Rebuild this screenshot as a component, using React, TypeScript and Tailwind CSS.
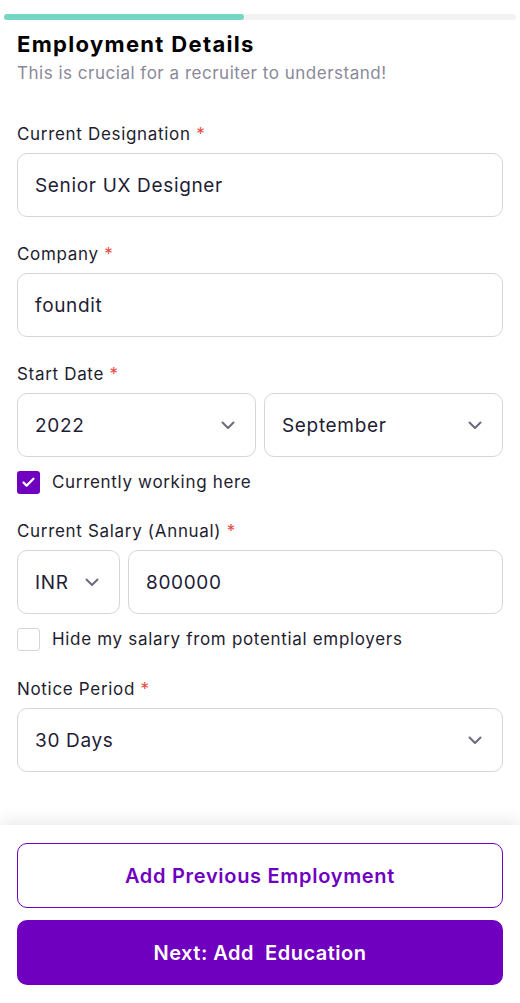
import { Check } from "lucide-react";

function Chevron() {
  return (
    <svg width="14" height="9" viewBox="0 0 14 9" fill="none" className="shrink-0">
      <path
        d="M1.5 1.5L7 7L12.5 1.5"
        stroke="#6b6a7e"
        strokeWidth="2"
        strokeLinecap="round"
        strokeLinejoin="round"
      />
    </svg>
  );
}

function Label({ text }: { text: string }) {
  return (
    <div className="h-[24px] text-[17px] leading-[24px] tracking-[0.04em] text-[#1e1d2f]">
      {text} <span className="text-[#e5483d]">*</span>
    </div>
  );
}

function TextBox({ value, className = "" }: { value: string; className?: string }) {
  return (
    <div
      className={`flex h-[64px] items-center rounded-[10px] border border-[#d6d6da] px-[17px] pt-[2px] text-[19px] tracking-[0.035em] text-[#1f1d36] ${className}`}
    >
      {value}
    </div>
  );
}

function SelectBox({ value, className = "" }: { value: string; className?: string }) {
  return (
    <div
      className={`flex h-[64px] items-center justify-between rounded-[10px] border border-[#d6d6da] pl-[17px] pr-[20px] text-[19px] tracking-[0.035em] text-[#1f1d36] ${className}`}
    >
      <span className="pt-[2px]">{value}</span>
      <Chevron />
    </div>
  );
}

export default function App() {
  return (
    <div className="flex min-h-screen flex-col bg-white font-['Inter',sans-serif]">
      <div className="mx-[4px] mt-[14px] h-[6px] rounded-full bg-[#f2f2f2]">
        <div className="h-full w-[240px] rounded-full bg-[#76d6c3]" />
      </div>

      <main className="px-[17px]">
        <h1 className="mt-[12px] text-[22px] font-bold leading-[24px] tracking-[0.06em] text-black">
          Employment Details
        </h1>
        <p className="mt-[6px] text-[17px] leading-[22px] tracking-[0.03em] text-[#8a8999]">
          This is crucial for a recruiter to understand!
        </p>

        <div className="mt-[38px]">
          <Label text="Current Designation" />
          <TextBox value="Senior UX Designer" className="mt-[7px]" />
        </div>

        <div className="mt-[25px]">
          <Label text="Company" />
          <TextBox value="foundit" className="mt-[7px]" />
        </div>

        <div className="mt-[25px]">
          <Label text="Start Date" />
          <div className="mt-[7px] grid grid-cols-2 gap-[8px]">
            <SelectBox value="2022" />
            <SelectBox value="September" />
          </div>
        </div>

        <label className="mt-[14px] flex h-[23px] items-center gap-[12px] text-[17px] tracking-[0.04em] text-[#1e1d2f]">
          <span className="flex h-[23px] w-[23px] items-center justify-center rounded-[3px] bg-[#7000c0]">
            <Check className="h-[15px] w-[15px] text-white" strokeWidth={3.5} />
          </span>
          Currently working here
        </label>

        <div className="mt-[25px]">
          <Label text="Current Salary (Annual)" />
          <div className="mt-[7px] flex gap-[8px]">
            <SelectBox value="INR" className="w-[103px]" />
            <TextBox value="800000" className="flex-1" />
          </div>
        </div>

        <label className="mt-[14px] flex h-[23px] items-center gap-[12px] text-[17px] tracking-[0.04em] text-[#1e1d2f]">
          <span className="h-[23px] w-[23px] rounded-[3px] border border-[#d6d6da]" />
          Hide my salary from potential employers
        </label>

        <div className="mt-[26px]">
          <Label text="Notice Period" />
          <SelectBox value="30 Days" className="mt-[7px]" />
        </div>
      </main>

      <footer className="mt-[53px] flex flex-col gap-[12px] bg-white px-[17px] pb-[18px] pt-[18px] shadow-[0_-6px_14px_rgba(0,0,0,0.07)]">
        <button
          type="button"
          className="h-[65px] rounded-[10px] border border-[#7000c0] text-[20px] font-semibold tracking-[0.035em] text-[#7000c0]"
        >
          Add Previous Employment
        </button>
        <button
          type="button"
          className="h-[65px] rounded-[10px] bg-[#7000bf] text-[20px] font-semibold tracking-[0.025em] text-white"
        >
          Next: Add&nbsp; Education
        </button>
      </footer>
    </div>
  );
}
